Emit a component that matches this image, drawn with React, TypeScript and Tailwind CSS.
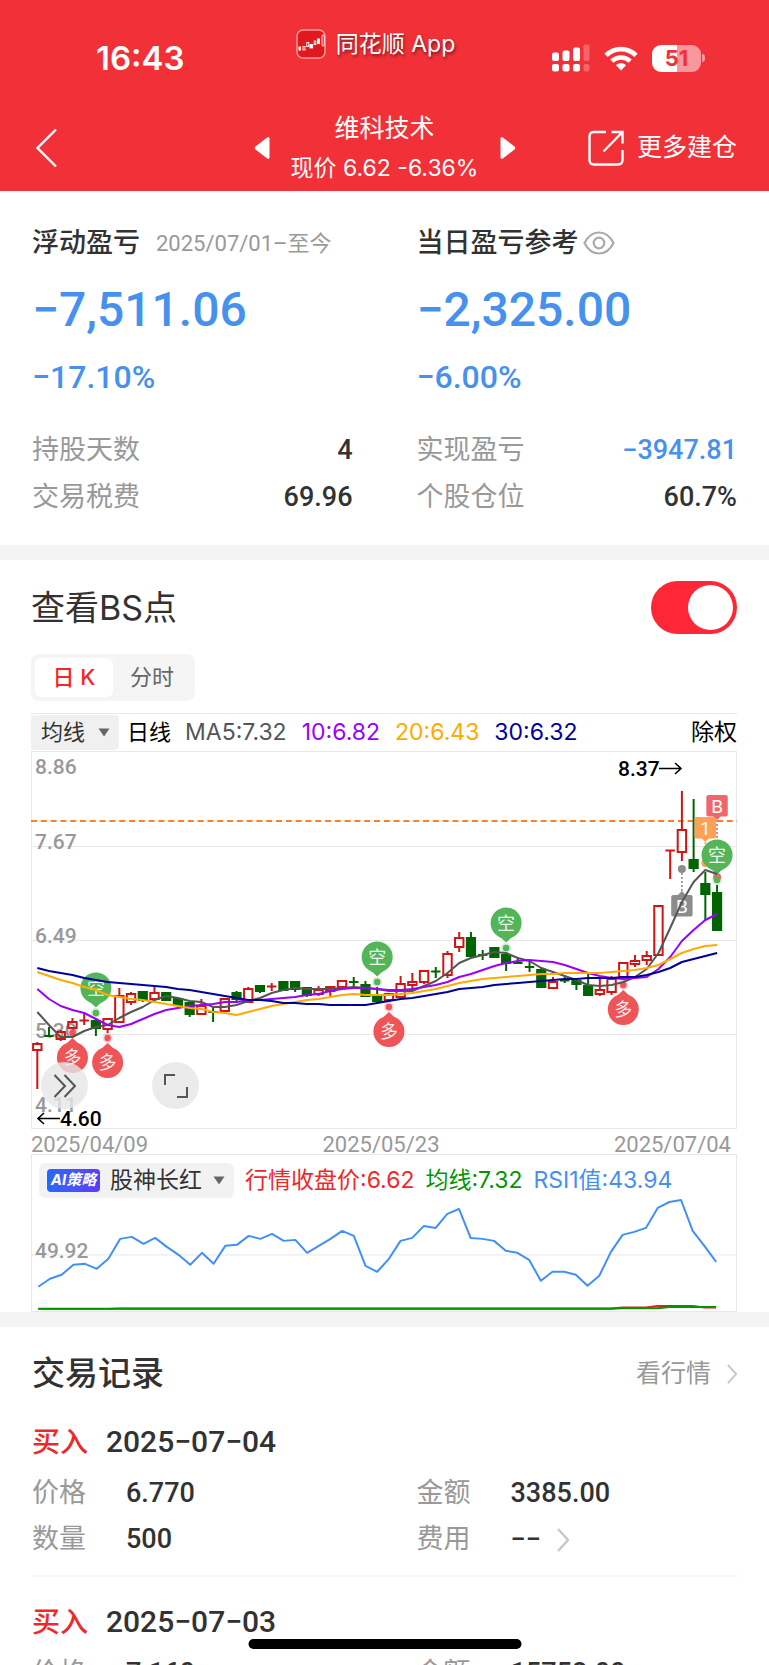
import React, { useState } from "react";

type Candle = [kind: "r" | "g", high: number, top: number, bottom: number, low: number];

const candles: Candle[] = [
  ["r", 291, 293, 299, 338], ["g", 276, 284, 286, 286], ["r", 279, 281, 288, 290], ["r", 267, 271, 277, 283],
  ["r", 263, 269, 270, 274], ["g", 267, 270, 277, 285], ["r", 267, 268, 278, 282], ["r", 237, 245, 271, 271],
  ["r", 241, 243, 251, 254], ["g", 241, 241, 249, 251], ["r", 236, 242, 248, 250], ["g", 241, 242, 249, 250],
  ["g", 247, 248, 254, 254], ["g", 251, 252, 263, 266], ["r", 248, 255, 263, 263], ["g", 256, 260, 262, 271],
  ["r", 247, 248, 260, 260], ["g", 240, 242, 248, 252], ["r", 236, 238, 251, 251], ["g", 235, 235, 240, 242],
  ["r", 232, 235, 236, 240], ["g", 230, 231, 239, 239], ["g", 231, 231, 238, 241], ["g", 237, 237, 244, 246],
  ["r", 235, 239, 243, 245], ["r", 235, 236, 240, 245], ["r", 229, 230, 236, 236], ["g", 226, 230, 232, 236],
  ["g", 230, 234, 245, 245], ["g", 236, 244, 250, 250], ["r", 242, 243, 249, 249], ["r", 225, 233, 246, 247],
  ["r", 222, 231, 234, 238], ["r", 219, 220, 231, 233], ["g", 216, 220, 221, 227], ["r", 200, 203, 224, 227],
  ["r", 181, 187, 196, 201], ["g", 181, 187, 205, 205], ["g", 199, 203, 205, 209], ["g", 196, 197, 206, 207],
  ["g", 204, 204, 212, 220], ["g", 206, 211, 213, 213], ["g", 211, 215, 217, 221], ["g", 217, 219, 236, 236],
  ["r", 226, 231, 237, 238], ["g", 226, 229, 230, 232], ["g", 229, 230, 233, 239], ["g", 223, 235, 244, 245],
  ["r", 227, 239, 243, 245], ["r", 225, 228, 241, 244], ["r", 211, 212, 226, 226], ["r", 204, 210, 213, 216],
  ["r", 200, 205, 209, 214], ["r", 155, 155, 204, 204], ["r", 99, 99, 100, 128], ["r", 40, 79, 101, 110],
  ["g", 48, 109, 117, 121], ["g", 121, 133, 143, 169], ["g", 134, 142, 179, 179],
];

const ma5 = [261, 274, 286, 286, 280, 276, 274, 267, 261, 256, 249, 245, 247, 250, 251, 256, 256, 254, 250, 247, 242, 239, 237, 238, 238, 238, 237, 236, 237, 238, 240, 240, 240, 235, 230, 222, 212, 207, 204, 201, 202, 207, 210, 217, 221, 225, 229, 234, 235, 234, 231, 226, 218, 202, 177, 151, 131, 119, 123];
const ma10 = [238, 248, 255, 259, 262, 268, 274, 276, 273, 268, 263, 259, 257, 255, 254, 253, 251, 251, 249, 249, 248, 247, 246, 244, 243, 240, 238, 237, 237, 238, 239, 239, 238, 236, 234, 231, 226, 223, 219, 215, 212, 210, 209, 210, 211, 214, 218, 222, 225, 227, 228, 227, 226, 218, 206, 190, 179, 169, 163];
const ma20 = [221, 225, 229, 232, 236, 239, 244, 246, 248, 249, 251, 253, 255, 257, 258, 261, 262, 264, 261, 258, 255, 253, 251, 249, 248, 246, 244, 243, 244, 244, 244, 243, 242, 240, 238, 235, 232, 230, 228, 227, 226, 225, 224, 223, 223, 222, 222, 222, 222, 221, 220, 219, 217, 214, 208, 202, 198, 195, 194];
const ma30 = [217, 220, 222, 224, 227, 229, 231, 232, 233, 234, 235, 236, 238, 239, 241, 243, 245, 247, 249, 249, 250, 252, 252, 253, 253, 254, 254, 254, 254, 252, 250, 248, 247, 245, 243, 241, 238, 237, 236, 234, 233, 232, 231, 230, 229, 228, 228, 227, 227, 227, 226, 226, 224, 221, 217, 211, 208, 205, 202];
const rsi = [89, 81, 77, 67, 66, 71, 61, 41, 39, 46, 40, 49, 57, 67, 55, 66, 48, 47, 38, 41, 36, 43, 42, 55, 48, 41, 33, 38, 68, 74, 61, 43, 40, 28, 30, 16, 11, 40, 41, 43, 53, 55, 62, 83, 74, 74, 77, 88, 78, 54, 37, 34, 30, 10, 4, 2, 33, 48, 64];

const xAt = (i: number) => 6.3 + i * 11.72;
const points = (ys: number[]) => ys.map((y, i) => `${xAt(i).toFixed(1)},${y}`).join(" ");

function Candlestick({ index, data }: { index: number; data: Candle }) {
  const [kind, high, top, bottom, low] = data;
  const x = xAt(index);
  const color = kind === "r" ? "#d11414" : "#006400";
  if (bottom - top <= 2) {
    return (
      <g stroke={color} strokeWidth={2}>
        <line x1={x} x2={x} y1={high} y2={low} />
        <line x1={x - 4.7} x2={x + 4.7} y1={(top + bottom) / 2} y2={(top + bottom) / 2} />
      </g>
    );
  }
  if (kind === "r") {
    return (
      <g stroke={color} strokeWidth={2} fill="none">
        <line x1={x} x2={x} y1={high} y2={top} />
        <line x1={x} x2={x} y1={bottom} y2={low} />
        <rect x={x - 4.2} y={top} width={8.4} height={bottom - top} />
      </g>
    );
  }
  return (
    <g stroke={color} strokeWidth={2} fill={color}>
      <line x1={x} x2={x} y1={high} y2={low} />
      <rect x={x - 4.1} y={top} width={8.2} height={bottom - top} />
    </g>
  );
}

function Pin({ index, dot, short }: { index: number; dot: number; short?: boolean }) {
  const x = xAt(index);
  const color = short ? "#53b557" : "#ef5457";
  const cy = short ? dot - 25 : dot + 24.5;
  const s = short ? 1 : -1;
  return (
    <g>
      <circle cx={x} cy={dot} r={5} fill={color} opacity={0.25} />
      <circle cx={x} cy={dot} r={3.2} fill={color} />
      <circle cx={x} cy={cy} r={15.5} fill={color} />
      <path d={`M${x - 7} ${cy + s * 13} L${x} ${cy + s * 19.5} L${x + 7} ${cy + s * 13} Z`} fill={color} />
      <text x={x} y={cy + 6.5} textAnchor="middle" fontSize={18} fill="#fff" fillOpacity={0.92}>
        {short ? "空" : "多"}
      </text>
    </g>
  );
}

function Flag({ index, top, dot, color, text }: { index: number; top: number; dot: number; color: string; text: string }) {
  const x = xAt(index);
  const below = dot > top;
  const edge = below ? top + 21 : top;
  const s = below ? 1 : -1;
  return (
    <g>
      <line x1={x} x2={x} y1={edge} y2={dot} stroke={color} strokeWidth={1.6} strokeDasharray="2 2" />
      <circle cx={x} cy={dot} r={4} fill={color} />
      <rect x={x - 10.7} y={top} width={21.4} height={21.4} rx={2} fill={color} />
      <path d={`M${x - 4} ${edge} L${x} ${edge + s * 4} L${x + 4} ${edge} Z`} fill={color} />
      <text x={x} y={top + 17.5} textAnchor="middle" fontSize={19} fill="#fff">
        {text}
      </text>
    </g>
  );
}

function PriceChart() {
  return (
    <svg viewBox="0 0 706 378" className="block h-auto w-full font-['Roboto','Noto_Sans_CJK_SC',sans-serif]" role="img" aria-label="日K">
      <g stroke="#e8e8e8" strokeWidth={1} fill="none">
        <rect x={0.5} y={0.5} width={705} height={377} />
        <path d="M0 95.5H706M0 189.5H706M0 283.5H706" />
      </g>
      <g fontSize={21} fontWeight={500} fill="#999">
        <text x={4} y={23}>8.86</text>
        <text x={4} y={98}>7.67</text>
        <text x={4} y={192}>6.49</text>
        <text x={4} y={287}>5.30</text>
        <text x={4} y={361}>4.11</text>
      </g>
      <line x1={0} x2={706} y1={70} y2={70} stroke="#ff7f27" strokeWidth={1.8} strokeDasharray="6 3.8" />
      {candles.map((c, i) => (
        <Candlestick key={i} index={i} data={c} />
      ))}
      <Flag index={55} top={144} dot={118} color="#8c8c8c" text="B" />
      <Flag index={57} top={66} dot={112} color="#ffa155" text="1" />
      <Flag index={58} top={44} dot={126} color="#ef666b" text="B" />
      <Pin index={5} dot={262} short />
      <Pin index={29} dot={231} short />
      <Pin index={40} dot={197} short />
      <Pin index={58} dot={129} short />
      <Pin index={3} dot={282} />
      <Pin index={6} dot={287} />
      <Pin index={30} dot={256} />
      <Pin index={50} dot={234} />
      <g fill="none" strokeWidth={2} strokeLinejoin="round">
        <polyline points={points(ma5)} stroke="#555" />
        <polyline points={points(ma10)} stroke="#9b00ff" />
        <polyline points={points(ma20)} stroke="#ffaa00" />
        <polyline points={points(ma30)} stroke="#00009b" />
      </g>
      <g fontSize={21} fontWeight={500} fill="#000">
        <text x={587} y={25}>8.37</text>
        <text x={29} y={375}>4.60</text>
      </g>
      <path d="M628 17.5H650M644 12L650 17.5L644 23M29 367.5H7M13 362L7 367.5L13 373" fill="none" stroke="#000" strokeWidth={1.6} />
    </svg>
  );
}

function RsiChart() {
  const base = rsi.map((_, i) => (i < 50 ? 111 : i < 54 ? 110.5 : 109.3));
  const close = rsi.map((_, i) => (i < 7 ? 111.2 : i < 50 ? 110.7 : i > 52 && i < 57 ? 108.3 : 109.8));
  return (
    <svg viewBox="0 0 706 113" className="block h-auto w-full font-['Roboto',sans-serif]" role="img" aria-label="RSI1">
      <path d="M0 57H706" stroke="#ececec" strokeWidth={1.2} />
      <text x={3} y={60} fontSize={21} fontWeight={500} fill="#999">49.92</text>
      <g fill="none" strokeWidth={2}>
        <polyline points={points(close)} stroke="#e02020" />
        <polyline points={points(base)} stroke="#009600" />
        <polyline points={points(rsi)} stroke="#4090f7" strokeLinejoin="round" />
      </g>
    </svg>
  );
}

function Caret() {
  return (
    <svg viewBox="0 0 12 9" className="pointer-events-none absolute right-[9px] h-[9px] w-3" aria-hidden="true">
      <path d="M0.5 0.5H11.5L6 8.5Z" fill="#666" />
    </svg>
  );
}

function Chevron({ className }: { className: string }) {
  return (
    <svg viewBox="0 0 12 24" className={className} fill="none" stroke="#c8c8c8" strokeWidth={2.4} aria-hidden="true">
      <path d="M1 1L11 12L1 23" />
    </svg>
  );
}

function StatusIcons() {
  return (
    <div className="flex items-center gap-[14px]">
      <svg viewBox="0 0 38 28" className="h-7 w-[38px]" fill="#fff" aria-hidden="true">
        <rect x="0" y="8.5" width="7" height="8.5" rx="2" />
        <rect x="10.5" y="6.5" width="7" height="10.5" rx="2" />
        <rect x="21" y="3.5" width="7" height="13.5" rx="2" />
        <rect x="31.5" y="0.5" width="6" height="16.5" rx="2" opacity=".25" />
        <rect x="0" y="20" width="7" height="7.5" rx="2" />
        <rect x="10.5" y="20" width="7" height="7.5" rx="2" />
        <rect x="21" y="20" width="7" height="7.5" rx="2" />
        <rect x="31.5" y="20" width="6" height="7.5" rx="2" opacity=".25" />
      </svg>
      <svg viewBox="0 0 34 25" className="h-[25px] w-[34px]" fill="none" stroke="#fff" strokeWidth="4.6" aria-hidden="true">
        <path d="M2 9.3C10.5 1 23.5 1 32 9.3" />
        <path d="M7.8 15.2C13 10.2 21 10.2 26.2 15.2" />
        <path d="M17 24.5L12 19.3C14.8 16.7 19.2 16.7 22 19.3Z" fill="#fff" stroke="none" />
      </svg>
      <div className="flex items-center gap-px">
        <div className="flex h-[27px] w-[49px] items-center justify-center rounded-[9px] bg-linear-to-r from-white from-50% to-white/50 to-50% text-[22px] font-bold text-[#f23037]">
          51
        </div>
        <div className="h-2 w-[3px] rounded-r-full bg-white/50" />
      </div>
    </div>
  );
}

function Header() {
  return (
    <header className="bg-[#f23037] text-white">
      <div className="grid h-[104px] grid-cols-3 items-start">
        <div className="pt-[38px] pl-24 text-[33px] leading-10 font-semibold">16:43</div>
        <div className="flex items-center justify-center gap-[10px] pt-[26px] pr-[18px]">
          <svg viewBox="0 0 30 30" className="h-[30px] w-[30px]" fill="none" stroke="#fff" aria-hidden="true">
            <rect x="1" y="1" width="28" height="28" rx="6" fill="#e0191f" stroke="#f9989b" strokeWidth="1.5" />
            <rect x="3" y="18" width="1.6" height="3" fill="#fff" />
            <rect x="7" y="17.5" width="2" height="3.5" strokeWidth=".9" />
            <rect x="10.8" y="13.5" width="2" height="4" strokeWidth=".9" />
            <rect x="14" y="15.5" width="2.6" height="3.4" fill="#fff" />
            <rect x="18.2" y="12" width="1.6" height="3.6" strokeWidth=".9" />
            <rect x="21.5" y="10" width="2" height="4.6" fill="#fff" />
            <rect x="26" y="6" width="2.2" height="11" rx="1" strokeWidth=".9" />
          </svg>
          <span className="text-[23px] leading-9 whitespace-nowrap text-shadow-[1px_2px_3px_rgb(0_0_0/0.5)]">同花顺 App</span>
        </div>
        <div className="flex justify-end pt-11 pr-16">
          <StatusIcons />
        </div>
      </div>
      <nav className="grid h-[87px] grid-cols-[1fr_auto_1fr] items-center px-8">
        <button type="button" aria-label="返回" className="w-8 pl-1">
          <svg viewBox="0 0 22 40" className="h-10 w-[22px]" fill="none" stroke="#fff" strokeWidth="2.4">
            <path d="M20 1.5L1.5 20L20 38.5" />
          </svg>
        </button>
        <div className="flex items-center gap-5">
          <button type="button" aria-label="上一只">
            <svg viewBox="0 0 16 24" className="h-6 w-4" fill="#fff">
              <path d="M13.5 1.2Q15.5 0.6 15.5 3V21Q15.5 23.4 13.5 22.8L1.5 13.5Q0 12 1.5 10.5Z" />
            </svg>
          </button>
          <div className="flex w-[190px] flex-col items-center whitespace-nowrap">
            <h1 className="text-[25px] leading-10">维科技术</h1>
            <p className="text-[23px] leading-10">现价 6.62 -6.36%</p>
          </div>
          <button type="button" aria-label="下一只">
            <svg viewBox="0 0 16 24" className="h-6 w-4" fill="#fff">
              <path d="M2.5 1.2Q0.5 0.6 0.5 3V21Q0.5 23.4 2.5 22.8L14.5 13.5Q16 12 14.5 10.5Z" />
            </svg>
          </button>
        </div>
        <button type="button" className="flex items-center gap-[13px] justify-self-end text-[25px] whitespace-nowrap">
          <svg viewBox="0 0 36 36" className="h-9 w-9" fill="none" stroke="#fff" strokeWidth="2.4" aria-hidden="true">
            <path d="M18 2H6Q1.5 2 1.5 6.500V30Q1.5 34.500 6 34.500H30Q34.500 34.500 34.500 30V20" />
            <path d="M23.500 2H34.500V13.500M34 2.500L15.500 21.500" />
          </svg>
          更多建仓
        </button>
      </nav>
    </header>
  );
}

function Stat({ label, value, blue }: { label: string; value: string; blue?: boolean }) {
  return (
    <div className="flex h-[47px] items-center justify-between">
      <dt className="text-[27px] text-[#999]">{label}</dt>
      <dd className={blue ? "font-['Roboto'] text-[27px] font-medium text-[#4691ee]" : "font-['Roboto'] text-[27px] font-medium text-[#323232]"}>{value}</dd>
    </div>
  );
}

function Summary() {
  return (
    <section className="grid grid-cols-2 gap-x-16 px-8 pt-[29px] pb-6">
      <div>
        <div className="flex h-[46px] items-center gap-4 whitespace-nowrap">
          <h2 className="text-[27px] font-medium text-[#323232]">浮动盈亏</h2>
          <span className="font-['Roboto','Noto_Sans_CJK_SC'] text-[22px] text-[#999]">2025/07/01–至今</span>
        </div>
        <p className="font-['Roboto'] text-[48px] leading-[88px] font-medium text-[#4691ee]">−7,511.06</p>
        <p className="font-['Roboto'] text-[32px] leading-[46px] font-medium text-[#4691ee]">−17.10%</p>
        <dl className="pt-[27px]">
          <Stat label="持股天数" value="4" />
          <Stat label="交易税费" value="69.96" />
        </dl>
      </div>
      <div>
        <div className="flex h-[46px] items-center gap-1 whitespace-nowrap">
          <h2 className="text-[27px] font-medium text-[#323232]">当日盈亏参考</h2>
          <button type="button" aria-label="显示或隐藏金额">
            <svg viewBox="0 0 32 24" className="h-6 w-8" fill="none" stroke="#aaa" strokeWidth="2.2">
              <path d="M1.500 12C5 5 10 1.500 16 1.500S27 5 30.500 12C27 19 22 22.500 16 22.500S5 19 1.500 12Z" />
              <circle cx="16" cy="12" r="5.300" />
            </svg>
          </button>
        </div>
        <p className="font-['Roboto'] text-[48px] leading-[88px] font-medium text-[#4691ee]">−2,325.00</p>
        <p className="font-['Roboto'] text-[32px] leading-[46px] font-medium text-[#4691ee]">−6.00%</p>
        <dl className="pt-[27px]">
          <Stat label="实现盈亏" value="−3947.81" blue />
          <Stat label="个股仓位" value="60.7%" />
        </dl>
      </div>
    </section>
  );
}

function ChartSection() {
  const [tab, setTab] = useState("day");
  const active = "h-[39px] w-[78px] rounded-md bg-white font-medium text-[#f02828]";
  const idle = "h-[39px] w-[78px] rounded-md text-[#666]";
  return (
    <section className="pt-[21px] pr-8 pl-[31px]">
      <div className="flex h-[53px] items-center justify-between">
        <label htmlFor="bs" className="text-[34px] text-[#323232]">查看BS点</label>
        <input
          id="bs"
          type="checkbox"
          role="switch"
          defaultChecked
          className="h-[53px] w-[86px] appearance-none rounded-full bg-[#ccc] p-1 before:block before:h-[45px] before:w-[45px] before:rounded-full before:bg-white checked:bg-[#ff2638] checked:before:ml-auto"
        />
      </div>
      <div className="mt-5 flex h-[47px] w-fit items-center rounded-lg bg-[#f5f5f5] px-1 text-[22px]" role="tablist">
        <button type="button" role="tab" aria-selected={tab === "day"} onClick={() => setTab("day")} className={tab === "day" ? active : idle}>日 K</button>
        <button type="button" role="tab" aria-selected={tab === "min"} onClick={() => setTab("min")} className={tab === "min" ? active : idle}>分时</button>
      </div>
      <div className="mt-3 flex h-[38px] items-center border-t border-[#e8e8e8] text-[23px] whitespace-nowrap">
        <div className="relative flex h-[35px] items-center rounded-sm bg-[#f0f0f0]">
          <select aria-label="指标" className="h-full w-[88px] appearance-none pl-[10px] text-[22px] text-[#323232]">
            <option>均线</option>
          </select>
          <Caret />
        </div>
        <span className="ml-2 text-[22px] text-black">日线</span>
        <div className="ml-[14px] flex gap-[15px]">
          <span className="text-[#555]">MA5:7.32</span>
          <span className="text-[#9b00ff]">10:6.82</span>
          <span className="text-[#ffaa00]">20:6.43</span>
          <span className="text-[#00009b]">30:6.32</span>
        </div>
        <button type="button" className="ml-auto text-black">除权</button>
      </div>
      <div className="relative">
        <PriceChart />
        <div className="absolute bottom-5 left-[10px] flex gap-16">
          <button type="button" aria-label="快进" className="flex h-[47px] w-[47px] items-center justify-center rounded-full bg-[#e6e6e6]/80">
            <svg viewBox="0 0 24 24" className="h-6 w-6" fill="none" stroke="#555" strokeWidth="2">
              <path d="M1.500 1L12 12L1.500 23M11.500 1L22 12L11.500 23" />
            </svg>
          </button>
          <button type="button" aria-label="全屏" className="flex h-[47px] w-[47px] items-center justify-center rounded-full bg-[#e6e6e6]/80">
            <svg viewBox="0 0 24 24" className="h-6 w-6" fill="none" stroke="#555" strokeWidth="2">
              <path d="M11 1H1V11M13 23H23V13" />
            </svg>
          </button>
        </div>
      </div>
      <div className="flex h-[25px] items-center justify-between pt-[6px] pr-[6px] font-['Roboto'] text-[22px] text-[#999]">
        <span>2025/04/09</span>
        <span>2025/05/23</span>
        <span>2025/07/04</span>
      </div>
      <div className="border border-[#e8e8e8]">
        <div className="flex items-center gap-[11px] pt-2 pl-[7px] text-[23px] whitespace-nowrap">
          <div className="relative flex h-[35px] items-center rounded-md bg-[#f2f2f2] pl-2">
            <span className="flex h-[23px] w-[53px] items-center justify-center rounded-sm bg-linear-to-r from-[#2468fa] to-[#5a3cf5] text-[15px] font-bold text-white italic">
              AI策略
            </span>
            <select aria-label="策略" className="h-full w-[134px] appearance-none pl-[10px] text-[#323232]">
              <option>股神长红</option>
            </select>
            <Caret />
          </div>
          <span className="text-[#f02828]">行情收盘价:6.62</span>
          <span className="text-[#009600]">均线:7.32</span>
          <span className="text-[#4691ee]">RSI1值:43.94</span>
        </div>
        <RsiChart />
      </div>
    </section>
  );
}

function Field({ label, value, arrow }: { label: string; value: string; arrow?: boolean }) {
  return (
    <div className="flex h-[46px] items-center">
      <dt className="w-[94px] text-[27px] text-[#999]">{label}</dt>
      <dd className="flex items-center gap-4 font-['Roboto'] text-[27px] font-medium text-[#323232]">
        {value}
        {arrow && <Chevron className="h-6 w-3" />}
      </dd>
    </div>
  );
}

function TradeRecord({ date, price, amount, quantity, fee }: { date: string; price: string; amount: string; quantity?: string; fee?: string }) {
  return (
    <article className="border-b-2 border-[#f7f7f7] pt-[19px] pb-3">
      <h3 className="flex h-[52px] items-center gap-[18px]">
        <span className="text-[28px] font-medium text-[#f02828]">买入</span>
        <time className="font-['Roboto'] text-[30px] font-medium text-[#323232]">{date}</time>
      </h3>
      <dl className="grid grid-cols-2 gap-x-16 pt-[3px]">
        <Field label="价格" value={price} />
        <Field label="金额" value={amount} />
        {quantity && <Field label="数量" value={quantity} />}
        {fee && <Field label="费用" value={fee} arrow />}
      </dl>
    </article>
  );
}

export default function App() {
  return (
    <div className="flex h-screen flex-col overflow-hidden bg-white font-['Inter','Noto_Sans_CJK_SC',sans-serif]">
      <Header />
      <main className="min-h-0 flex-1 overflow-hidden">
        <Summary />
        <div className="h-[15px] bg-[#f4f4f4]" />
        <ChartSection />
        <div className="h-[15px] bg-[#f4f4f4]" />
        <section className="px-8 pt-6">
          <div className="flex h-[46px] items-center justify-between">
            <h2 className="text-[33px] font-medium text-[#323232]">交易记录</h2>
            <a href="#quote" className="flex items-center gap-4 text-[25px] text-[#999]">
              看行情
              <Chevron className="h-5 w-[10px]" />
            </a>
          </div>
          <TradeRecord date="2025−07−04" price="6.770" amount="3385.00" quantity="500" fee="−−" />
          <TradeRecord date="2025−07−03" price="7.160" amount="15752.00" />
        </section>
      </main>
      <div className="fixed bottom-4 left-1/2 h-[10px] w-[273px] -translate-x-1/2 rounded-full bg-black" />
    </div>
  );
}
